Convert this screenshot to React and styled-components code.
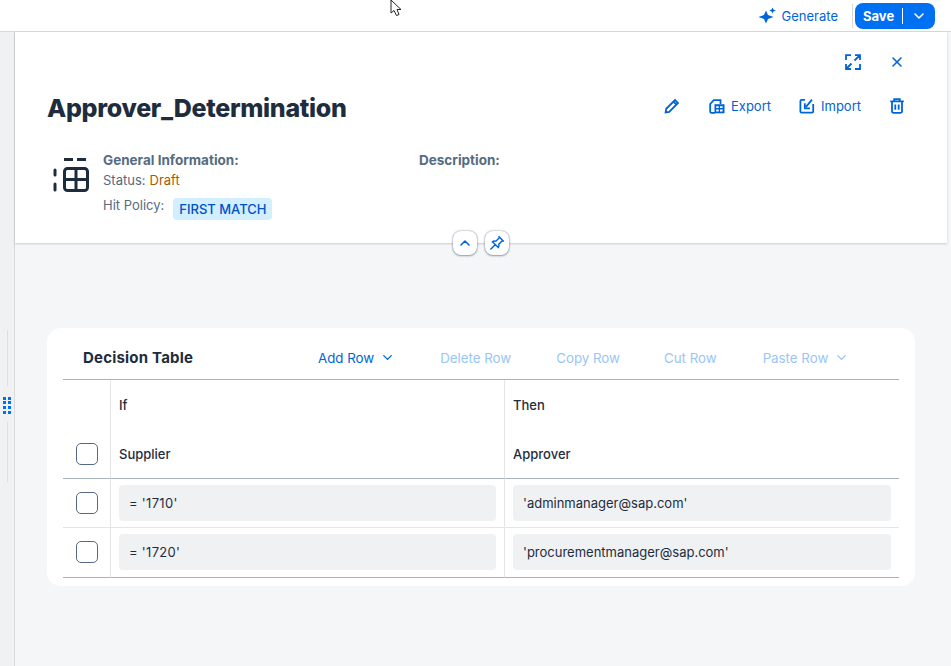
import { Fragment } from "react";
import styled, { createGlobalStyle } from "styled-components";
import { ChevronDown, ChevronUp, X } from "lucide-react";

const Global = createGlobalStyle`
  html, body { margin: 0; padding: 0; }
  body {
    font-family: Inter, "Noto Sans", sans-serif;
    background: #f5f6f7;
    color: #1d2d3e;
  }
  * { box-sizing: border-box; }
`;

const Page = styled.div`
  position: relative;
  width: 951px;
  height: 666px;
  overflow: hidden;
  display: flex;
  flex-direction: column;
`;

const TopBar = styled.div`
  height: 32px;
  background: #fff;
  border-bottom: 1px solid #d9d9d9;
  display: flex;
  align-items: center;
  justify-content: flex-end;
  padding-right: 16px;
`;

const Generate = styled.button`
  display: flex;
  align-items: center;
  gap: 5px;
  border: none;
  background: none;
  padding: 0;
  font: inherit;
  font-size: 13px;
  color: #0064d9;
  margin-right: 14px;
`;

const Divider = styled.span`
  width: 1px;
  height: 24px;
  background: #d9d9d9;
  margin-right: 2px;
`;

const SaveButton = styled.button`
  width: 80px;
  height: 26px;
  border: none;
  border-radius: 8px;
  background: #0070f2;
  color: #fff;
  font: inherit;
  font-size: 13px;
  font-weight: 700;
  padding: 0 0 0 8px;
  display: flex;
  align-items: center;
`;

const SaveSep = styled.span`
  width: 1px;
  height: 16px;
  background: #fff;
  margin: 0 8px;
`;

const Body = styled.div`
  flex: 1;
  display: flex;
`;

const Rail = styled.div`
  position: relative;
  width: 15px;
  background: #eff1f3;
  border-right: 1px solid #d9d9d9;
`;

const GripLine = styled.span`
  position: absolute;
  left: 7px;
  width: 1px;
  top: ${(p) => p.$top}px;
  height: ${(p) => p.$height}px;
  background: #dde0e3;
`;

const Grip = styled.span`
  position: absolute;
  left: 3px;
  top: 365px;
  display: grid;
  grid-template-columns: 3px 3px;
  column-gap: 2px;
  row-gap: 1px;
  & i {
    width: 3px;
    height: 3px;
    background: #0070f2;
  }
  & i:nth-child(n + 5) {
    margin-top: 1px;
  }
`;

const Main = styled.main`
  flex: 1;
  display: flex;
  flex-direction: column;
`;

const Header = styled.header`
  position: relative;
  width: 932px;
  height: 211px;
  background: #fff;
  box-shadow: 0 1px 2px rgba(85, 107, 130, 0.3);
  padding: 0 32px;
  display: flex;
  flex-direction: column;
`;

const WindowActions = styled.div`
  display: flex;
  justify-content: flex-end;
  align-items: center;
  gap: 28px;
  height: 60px;
  padding: 0 10px 0 0;
  color: #0064d9;
`;

const TitleRow = styled.div`
  display: flex;
  align-items: center;
  justify-content: space-between;
  height: 32px;
`;

const Title = styled.h1`
  margin: 0;
  font-size: 25px;
  font-weight: 800;
  letter-spacing: -0.3px;
  color: #1d2d3e;
`;

const Actions = styled.div`
  display: flex;
  align-items: center;
  padding: 0 10px 4px 0;
  color: #0064d9;
`;

const Action = styled.button`
  display: flex;
  align-items: center;
  gap: 6px;
  border: none;
  background: none;
  padding: 0;
  margin-left: ${(p) => p.$gap}px;
  font: inherit;
  font-size: 13px;
  color: #0064d9;
`;

const Info = styled.div`
  display: flex;
  margin-top: 26px;
  padding-left: 6px;
`;

const InfoIcon = styled.div`
  width: 50px;
  padding-top: 7px;
`;

const InfoColumn = styled.div`
  width: 316px;
  display: flex;
  flex-direction: column;
  font-size: 13px;
  color: #556b82;
`;

const InfoLabel = styled.div`
  font-size: 13.5px;
  font-weight: 700;
  line-height: 20px;
`;

const InfoLine = styled.div`
  line-height: 20px;
  display: flex;
  align-items: center;
  gap: 4px;
`;

const HitLine = styled(InfoLine)`
  margin-top: 5px;
  gap: 9px;
  align-items: flex-start;
`;

const Draft = styled.span`
  color: #aa5808;
`;

const Tag = styled.span`
  height: 22px;
  line-height: 22px;
  padding: 0 5px 0 6px;
  border-radius: 4px;
  background: #d1efff;
  color: #0050c8;
  font-size: 13px;
  font-weight: 500;
  margin-top: 3px;
`;

const Floating = styled.div`
  position: absolute;
  left: 438px;
  bottom: -12px;
  display: flex;
  gap: 8px;
`;

const RoundButton = styled.button`
  width: 24px;
  height: 24px;
  padding: 0;
  border: none;
  border-radius: 8px;
  background: #fff;
  color: #0064d9;
  box-shadow: 0 0 2px rgba(85, 107, 130, 0.8), 0 1px 2px rgba(85, 107, 130, 0.5);
  display: flex;
  align-items: center;
  justify-content: center;
`;

const Card = styled.section`
  width: 868px;
  height: 258px;
  margin: 85px 0 0 32px;
  padding: 0 16px;
  background: #fff;
  border-radius: 14px;
`;

const Toolbar = styled.div`
  height: 52px;
  border-bottom: 1px solid #a8b2bd;
  display: flex;
  align-items: center;
  padding: 8px 0 0 20px;
`;

const CardTitle = styled.h2`
  margin: 0 125px 0 0;
  width: 110px;
  font-size: 15px;
  font-weight: 700;
  letter-spacing: 0.2px;
  color: #1d2d3e;
  white-space: nowrap;
`;

const ToolButton = styled.button`
  display: flex;
  align-items: center;
  gap: 6px;
  border: none;
  background: none;
  padding: 0;
  margin-right: ${(p) => p.$gap || 0}px;
  font: inherit;
  font-size: 13.3px;
  color: ${(p) => (p.disabled ? "#99c6f6" : "#0064d9")};
`;

const Grid = styled.div`
  display: grid;
  grid-template-columns: 48px 394px 394px;
`;

const Cell = styled.div`
  height: ${(p) => p.$height}px;
  display: flex;
  align-items: center;
  justify-content: ${(p) => (p.$check ? "center" : "flex-start")};
  padding: ${(p) => (p.$check ? "0 0 0 1px" : "0 8px")};
  border-right: ${(p) => (p.$last ? "none" : "1px solid #e5e5e5")};
  border-bottom: ${(p) => (p.$border ? `1px solid ${p.$border}` : "none")};
  font-size: 13px;
  font-weight: 500;
  color: #1d2d3e;
`;

const RowCell = styled(Cell)`
  align-items: flex-start;
  padding-top: ${(p) => (p.$check ? 13 : 6)}px;
`;

const Check = styled.span`
  width: 22px;
  height: 22px;
  border: 1px solid #556b82;
  border-radius: 5px;
  background: #fff;
`;

const Field = styled.div`
  width: 100%;
  height: 36px;
  line-height: 36px;
  padding: 0 10px;
  border-radius: 4px;
  background: #eff1f2;
  font-size: 13px;
  font-weight: 400;
  color: #1d2d3e;
`;

const SupplierField = styled(Field)`
  letter-spacing: 0.3px;
`;

const Cursor = styled.svg`
  position: absolute;
  left: 390px;
  top: -1px;
`;

const rows = [
  { supplier: "= '1710'", approver: "'adminmanager@sap.com'", border: "#e5e5e5", height: 49 },
  { supplier: "= '1720'", approver: "'procurementmanager@sap.com'", border: "#a8b2bd", height: 50 },
];

const Stroke = { fill: "none", stroke: "currentColor", strokeWidth: 1.8 };

const SparkleIcon = () => (
  <svg width="19" height="18" viewBox="0 0 19 18" fill="#0064d9">
    <path d="M8 3.5 L10 8 L15.5 10 L10 12 L8 16.5 L6 12 L0.5 10 L6 8 Z" />
    <path d="M14.5 0.5 L15.4 2.6 L17.8 3.5 L15.4 4.4 L14.5 6.5 L13.6 4.4 L11.2 3.5 L13.6 2.6 Z" />
  </svg>
);

const ExpandIcon = () => (
  <svg width="16" height="16" viewBox="0 0 16 16" {...Stroke}>
    <path d="M1 6V1.2H6M10 1.2H15V6M15 1.2L9.5 6.5M1 10V15H6M1 15L6.5 9.5M15 10V15H10" />
  </svg>
);

const PencilIcon = () => (
  <svg width="16" height="16" viewBox="0 0 16 16" {...Stroke}>
    <path d="M1.6 14.4L2.2 10.8L11 2L14 5L5.2 13.8ZM9.4 3.6L12.4 6.6" />
  </svg>
);

const ExportIcon = () => (
  <svg width="16" height="16" viewBox="0 0 16 16" {...Stroke}>
    <path d="M6 14.8H2.5Q1.2 14.8 1.2 13.5V6L4.8 2.2H11.5V6" />
    <path d="M5.8 6.5H15.2V15H5.8Z" fill="currentColor" strokeWidth="0.6" />
    <path d="M7.2 8.2H9.7V10H7.2ZM11 8.2H13.6V10H11ZM7.2 11.4H9.7V13.4H7.2ZM11 11.4H13.6V13.4H11Z" fill="#fff" stroke="none" />
  </svg>
);

const ImportIcon = () => (
  <svg width="16" height="16" viewBox="0 0 16 16" {...Stroke}>
    <path d="M6 1.8H2.6Q1.4 1.8 1.4 3V13.4Q1.4 14.6 2.6 14.6H13Q14.2 14.6 14.2 13.4V6" />
    <path d="M13 1.6L7 8.8M5.8 5.2V10.4H11" />
  </svg>
);

const TrashIcon = () => (
  <svg width="16" height="16" viewBox="0 0 16 16" {...Stroke}>
    <path d="M1.2 3.4H14.8M5.2 3.4V1.2H10.8V3.4M3 3.4V13.6Q3 14.8 4.2 14.8H11.8Q13 14.8 13 13.6V3.4M6.3 6.4V11.8M9.7 6.4V11.8" />
  </svg>
);

const PinIcon = () => (
  <svg width="16" height="16" viewBox="0 0 16 16" fill="none" stroke="currentColor" strokeWidth="1.4">
    <path d="M9.5 1.2L14.8 6.5M10.6 2.4L6.8 6.2C5.2 5.7 4.2 6 3.4 6.7L9.3 12.6C10 11.8 10.3 10.8 9.8 9.2L13.6 5.4M6.2 9.8L1.4 14.6" />
  </svg>
);

const TableIcon = () => (
  <svg width="36" height="36" viewBox="0 0 36 36" fill="none" stroke="#1d2d3e" strokeWidth="3">
    <path d="M11 2.5H20M24 2.5H33" />
    <path d="M2 13V18M2 27V33" strokeLinecap="round" />
    <rect x="11.5" y="11.5" width="23" height="22" rx="3" />
    <path d="M23 11.5V33.5M11.5 22.5H34.5" />
  </svg>
);

const App = () => (
  <Page>
    <Global />
    <TopBar>
      <Generate>
        <SparkleIcon />
        Generate
      </Generate>
      <Divider />
      <SaveButton>
        Save
        <SaveSep />
        <ChevronDown size={16} strokeWidth={2.4} />
      </SaveButton>
    </TopBar>
    <Body>
      <Rail>
        <GripLine $top={298} $height={56} />
        <GripLine $top={390} $height={60} />
        <Grip>
          <i /><i /><i /><i /><i /><i /><i /><i />
        </Grip>
      </Rail>
      <Main>
        <Header>
          <WindowActions>
            <ExpandIcon />
            <X size={16} strokeWidth={2.4} />
          </WindowActions>
          <TitleRow>
            <Title>Approver_Determination</Title>
            <Actions>
              <PencilIcon />
              <Action $gap={29}><ExportIcon />Export</Action>
              <Action $gap={28}><ImportIcon />Import</Action>
              <Action $gap={28}><TrashIcon /></Action>
            </Actions>
          </TitleRow>
          <Info>
            <InfoIcon><TableIcon /></InfoIcon>
            <InfoColumn>
              <InfoLabel>General Information:</InfoLabel>
              <InfoLine>Status: <Draft>Draft</Draft></InfoLine>
              <HitLine>Hit Policy: <Tag>FIRST MATCH</Tag></HitLine>
            </InfoColumn>
            <InfoColumn>
              <InfoLabel>Description:</InfoLabel>
            </InfoColumn>
          </Info>
          <Floating>
            <RoundButton><ChevronUp size={16} strokeWidth={2.4} /></RoundButton>
            <RoundButton><PinIcon /></RoundButton>
          </Floating>
        </Header>
        <Card>
          <Toolbar>
            <CardTitle>Decision Table</CardTitle>
            <ToolButton $gap={45}>Add Row <ChevronDown size={15} strokeWidth={2.2} /></ToolButton>
            <ToolButton $gap={45} disabled>Delete Row</ToolButton>
            <ToolButton $gap={44} disabled>Copy Row</ToolButton>
            <ToolButton $gap={46} disabled>Cut Row</ToolButton>
            <ToolButton disabled>Paste Row <ChevronDown size={15} strokeWidth={2.2} /></ToolButton>
          </Toolbar>
          <Grid>
            <Cell $check $height={50} />
            <Cell $height={50}>If</Cell>
            <Cell $height={50} $last>Then</Cell>
            <Cell $check $height={49} $border="#a8b2bd"><Check /></Cell>
            <Cell $height={49} $border="#a8b2bd">Supplier</Cell>
            <Cell $height={49} $border="#a8b2bd" $last>Approver</Cell>
            {rows.map((row) => (
              <Fragment key={row.supplier}>
                <RowCell $check $height={row.height} $border={row.border}><Check /></RowCell>
                <RowCell $height={row.height} $border={row.border}><SupplierField>{row.supplier}</SupplierField></RowCell>
                <RowCell $height={row.height} $border={row.border} $last><Field>{row.approver}</Field></RowCell>
              </Fragment>
            ))}
          </Grid>
        </Card>
      </Main>
    </Body>
    <Cursor width="14" height="18" viewBox="0 0 14 18">
      <path d="M1 1V14L4 11.5L6.5 16.5L9 15.5L7 10.5H11Z" fill="#fff" stroke="#222" strokeWidth="1" />
    </Cursor>
  </Page>
);

export default App;
